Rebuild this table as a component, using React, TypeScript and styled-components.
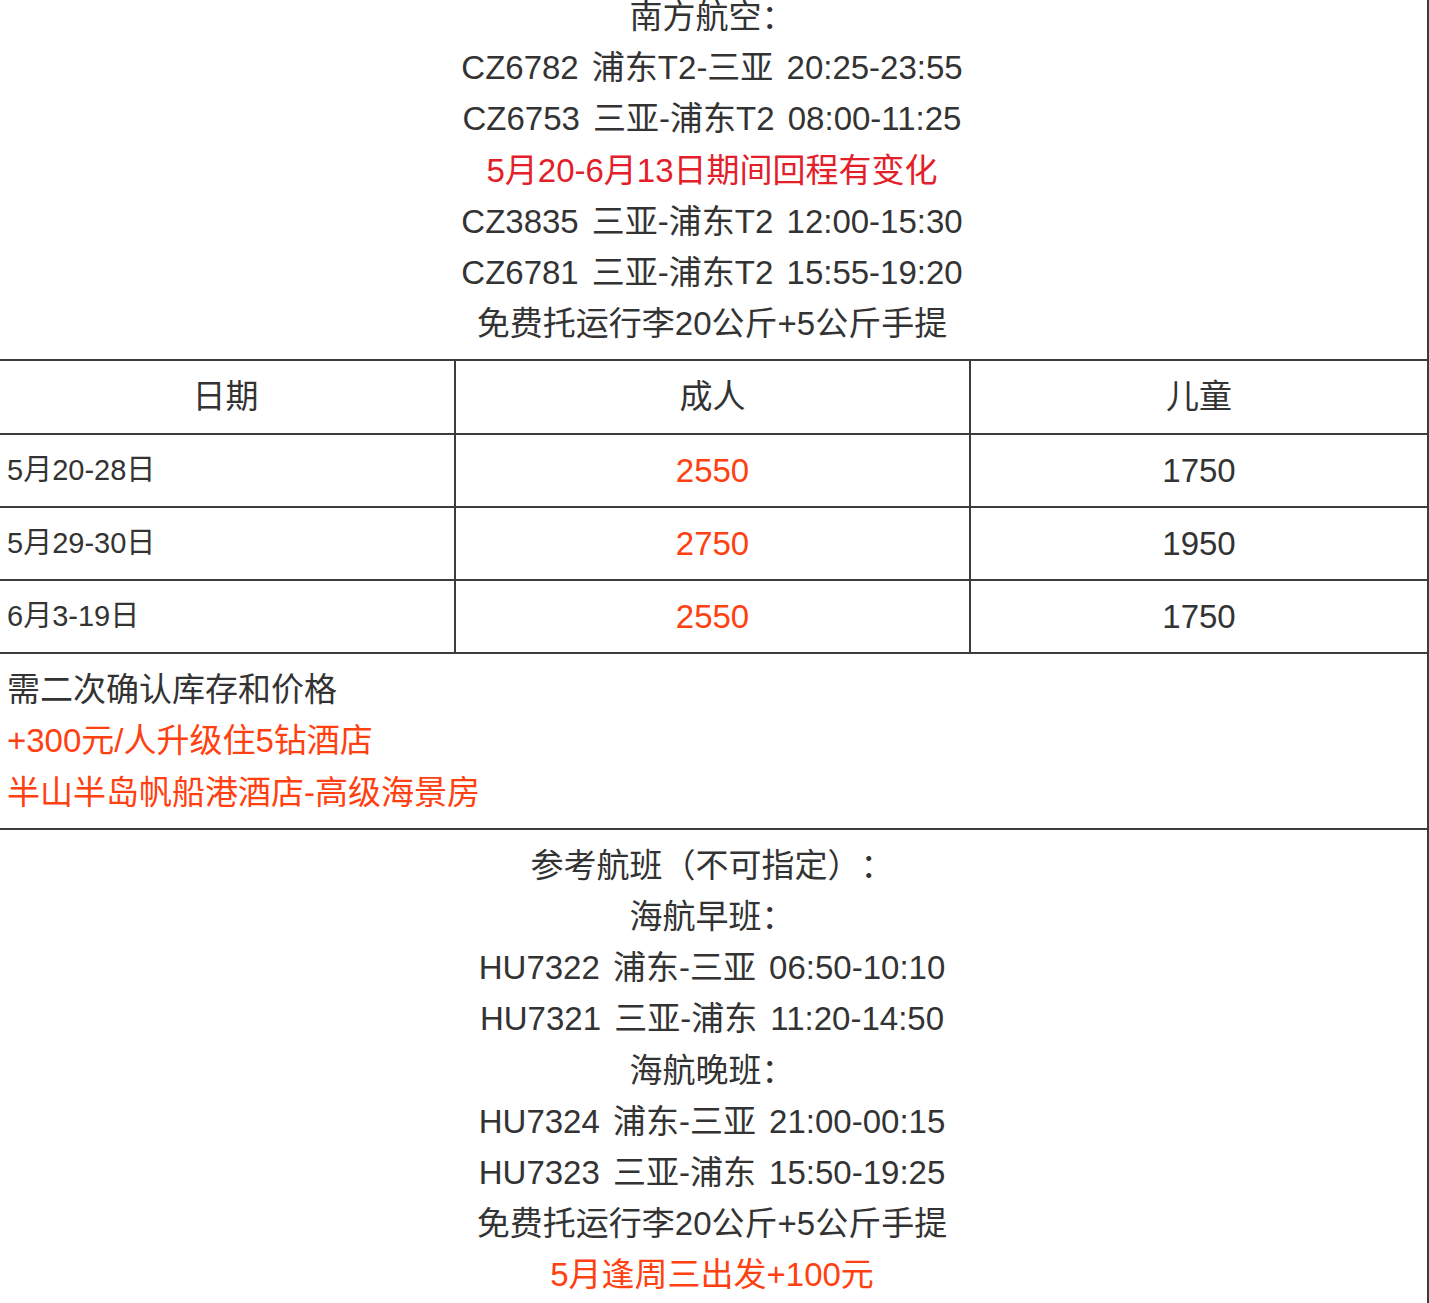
import styled, { createGlobalStyle } from 'styled-components'

const GlobalStyle = createGlobalStyle`
  html, body {
    margin: 0;
    padding: 0;
    background: #fff;
    overflow: hidden;
  }
  body {
    font-family: "Liberation Sans", "Noto Sans CJK SC", sans-serif;
    color: #333;
    text-spacing-trim: space-all;
  }
`

const Page = styled.div`
  margin: -21px 0 0 -5px;
`

const Sheet = styled.div`
  display: grid;
  grid-template-columns: 459px 515px 458px;
  width: 1434px;
  border-top: 2px solid #3c3c3c;
  border-left: 2px solid #3c3c3c;
`

const Cell = styled.div<{ $align?: 'left' | 'center'; $full?: boolean; $small?: boolean }>`
  grid-column: ${(p) => (p.$full ? '1 / -1' : 'auto')};
  padding: 10px;
  border-right: 2px solid #3c3c3c;
  border-bottom: 2px solid #3c3c3c;
  font-size: ${(p) => (p.$small ? '29px' : '33px')};
  line-height: 51.2px;
  text-align: ${(p) => p.$align || 'center'};
  word-spacing: 4px;
`

const Line = styled.div<{ $tone?: 'red' | 'orange' }>`
  color: ${(p) => (p.$tone === 'red' ? '#e3202a' : p.$tone === 'orange' ? '#ff4010' : '#333')};
  white-space: nowrap;
`

const Price = styled.span`
  color: #ff4010;
`

const priceRows = [
  { date: '5月20-28日', adult: '2550', child: '1750' },
  { date: '5月29-30日', adult: '2750', child: '1950' },
  { date: '6月3-19日', adult: '2550', child: '1750' },
]

export default function App() {
  return (
    <Page>
      <GlobalStyle />
      <Sheet>
        <Cell $full>
          <Line>南方航空：</Line>
          <Line>CZ6782 浦东T2-三亚 20:25-23:55</Line>
          <Line>CZ6753 三亚-浦东T2 08:00-11:25</Line>
          <Line $tone="red">5月20-6月13日期间回程有变化</Line>
          <Line>CZ3835 三亚-浦东T2 12:00-15:30</Line>
          <Line>CZ6781 三亚-浦东T2 15:55-19:20</Line>
          <Line>免费托运行李20公斤+5公斤手提</Line>
        </Cell>

        <Cell>日期</Cell>
        <Cell>成人</Cell>
        <Cell>儿童</Cell>

        {priceRows.map((row) => (
          <>
            <Cell key={row.date} $align="left" $small>{row.date}</Cell>
            <Cell><Price>{row.adult}</Price></Cell>
            <Cell>{row.child}</Cell>
          </>
        ))}

        <Cell $full $align="left">
          <Line>需二次确认库存和价格</Line>
          <Line $tone="orange">+300元/人升级住5钻酒店</Line>
          <Line $tone="orange">半山半岛帆船港酒店-高级海景房</Line>
        </Cell>

        <Cell $full>
          <Line>参考航班（不可指定）：</Line>
          <Line>海航早班：</Line>
          <Line>HU7322 浦东-三亚 06:50-10:10</Line>
          <Line>HU7321 三亚-浦东 11:20-14:50</Line>
          <Line>海航晚班：</Line>
          <Line>HU7324 浦东-三亚 21:00-00:15</Line>
          <Line>HU7323 三亚-浦东 15:50-19:25</Line>
          <Line>免费托运行李20公斤+5公斤手提</Line>
          <Line $tone="orange">5月逢周三出发+100元</Line>
        </Cell>
      </Sheet>
    </Page>
  )
}
